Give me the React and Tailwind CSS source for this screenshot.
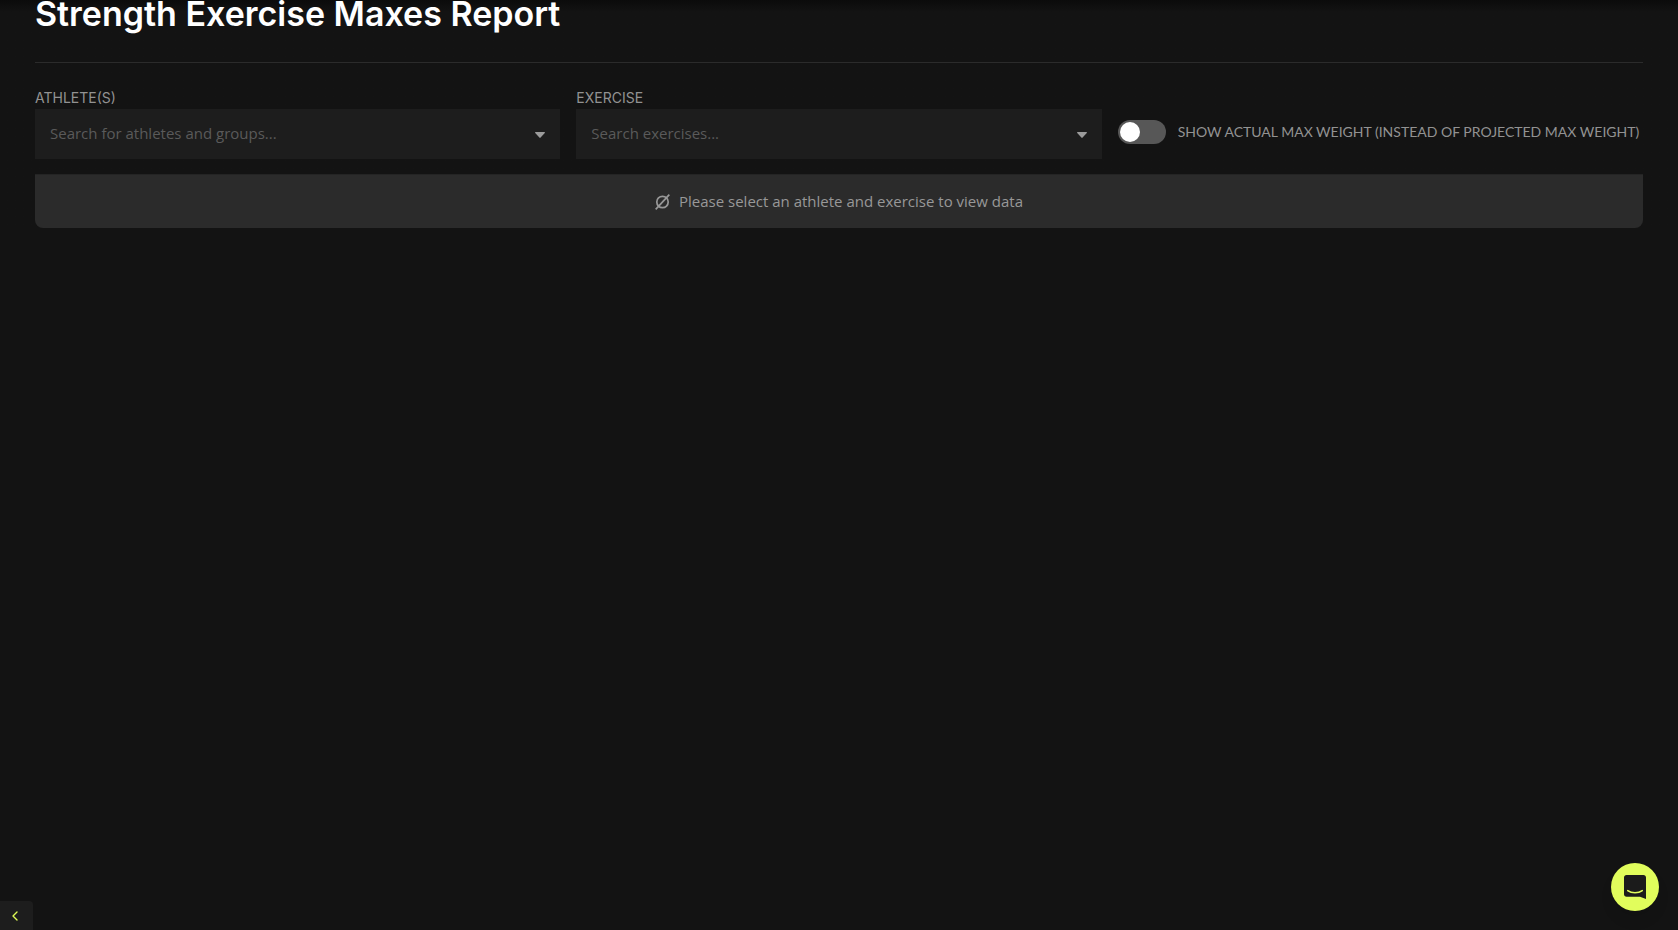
import { useState } from 'react'
import { ChevronLeft } from 'lucide-react'

const SearchSelect = ({ id, label, placeholder }) => {
  const [query, setQuery] = useState('')

  return (
    <div className="min-w-0">
      <label htmlFor={id} className="block pt-px pb-px text-sm leading-5 uppercase text-[#929292] font-['Inter',sans-serif] whitespace-nowrap">
        {label}
      </label>
      <div className="flex items-center h-[50px] px-[15px] bg-[#1d1d1d]">
        <input
          id={id}
          type="text"
          value={query}
          onChange={(e) => setQuery(e.target.value)}
          placeholder={placeholder}
          className="flex-1 min-w-0 h-full pb-0.5 bg-transparent text-[15px] text-white placeholder-[#5a5a5a] outline-none"
        />
        <svg className="w-[10px] h-2 mt-0.5 text-[#9b9b9b]" viewBox="0 0 10 8" fill="currentColor">
          <path d="M.7 1h8.6c.6 0 .9.7.5 1.1L5.6 6.6a.8.8 0 0 1-1.2 0L.2 2.1C-.2 1.7 .1 1 .7 1z" />
        </svg>
      </div>
    </div>
  )
}

const App = () => {
  const [showActual, setShowActual] = useState(false)

  return (
    <div className="min-h-screen bg-[#131313] font-['Open_Sans',sans-serif]">
      <main className="px-[35px] bg-linear-to-b from-[#0b0b0b] to-[#131313] to-[12px]">
        <h1 className="h-[62px] text-[34px] leading-7 font-semibold text-white font-['Inter',sans-serif]">
          Strength Exercise Maxes Report
        </h1>

        {/* Filters */}
        <form className="grid grid-cols-1 md:grid-cols-3 gap-4 pt-6 border-t border-[#2b2b2b]">
          <SearchSelect id="athletes" label="Athlete(s)" placeholder="Search for athletes and groups..." />
          <SearchSelect id="exercise" label="Exercise" placeholder="Search exercises..." />

          <label className="flex items-center gap-3 pt-7 pb-[10px] cursor-pointer">
            <input
              type="checkbox"
              checked={showActual}
              onChange={(e) => setShowActual(e.target.checked)}
              className="peer sr-only"
            />
            <span className="flex items-center shrink-0 w-12 h-6 p-0.5 rounded-full bg-[#575757] peer-checked:justify-end">
              <span className="size-5 rounded-full bg-white" />
            </span>
            <span className="text-sm leading-5 uppercase text-[#929292] font-['Lato',sans-serif]">
              Show actual max weight (instead of projected max weight)
            </span>
          </label>
        </form>

        {/* Empty state */}
        <div className="mt-[15px] flex items-center justify-center gap-2 h-[54px] rounded-b-lg border-t border-[#242424] bg-[#2b2b2b] text-[15px] text-[#989898]">
          <svg className="size-4" viewBox="0 0 16 16" fill="none" stroke="currentColor" strokeWidth="1.7">
            <circle cx="7.5" cy="8" r="5.7" />
            <path d="M.7 15.3L14.3.7" />
          </svg>
          <p>Please select an athlete and exercise to view data</p>
        </div>
      </main>

      <button
        type="button"
        aria-label="Collapse sidebar"
        className="fixed left-0 bottom-0 flex items-center w-[33px] h-[29px] pl-[7px] rounded-tr bg-[#1d1d1d] text-[#dffb55]"
      >
        <ChevronLeft size={16} strokeWidth={2} />
      </button>

      <button
        type="button"
        aria-label="Open chat"
        className="fixed right-[19px] bottom-[19px] flex items-center justify-center size-12 rounded-full bg-[#e1fd5c] shadow-lg"
      >
        <svg className="w-[22px] h-6" viewBox="0 0 22 24" fill="none">
          <path d="M2.5 0h17C20.9 0 22 1.1 22 2.5V24l-6-2.2H2.5C1.1 21.8 0 20.7 0 19.3V2.5C0 1.1 1.1 0 2.5 0z" fill="#1b1b1b" />
          <path d="M3.7 15.6c4 3 10.6 3 14.6 0" stroke="#e1fd5c" strokeWidth="1.5" strokeLinecap="round" />
        </svg>
      </button>
    </div>
  )
}

export default App
